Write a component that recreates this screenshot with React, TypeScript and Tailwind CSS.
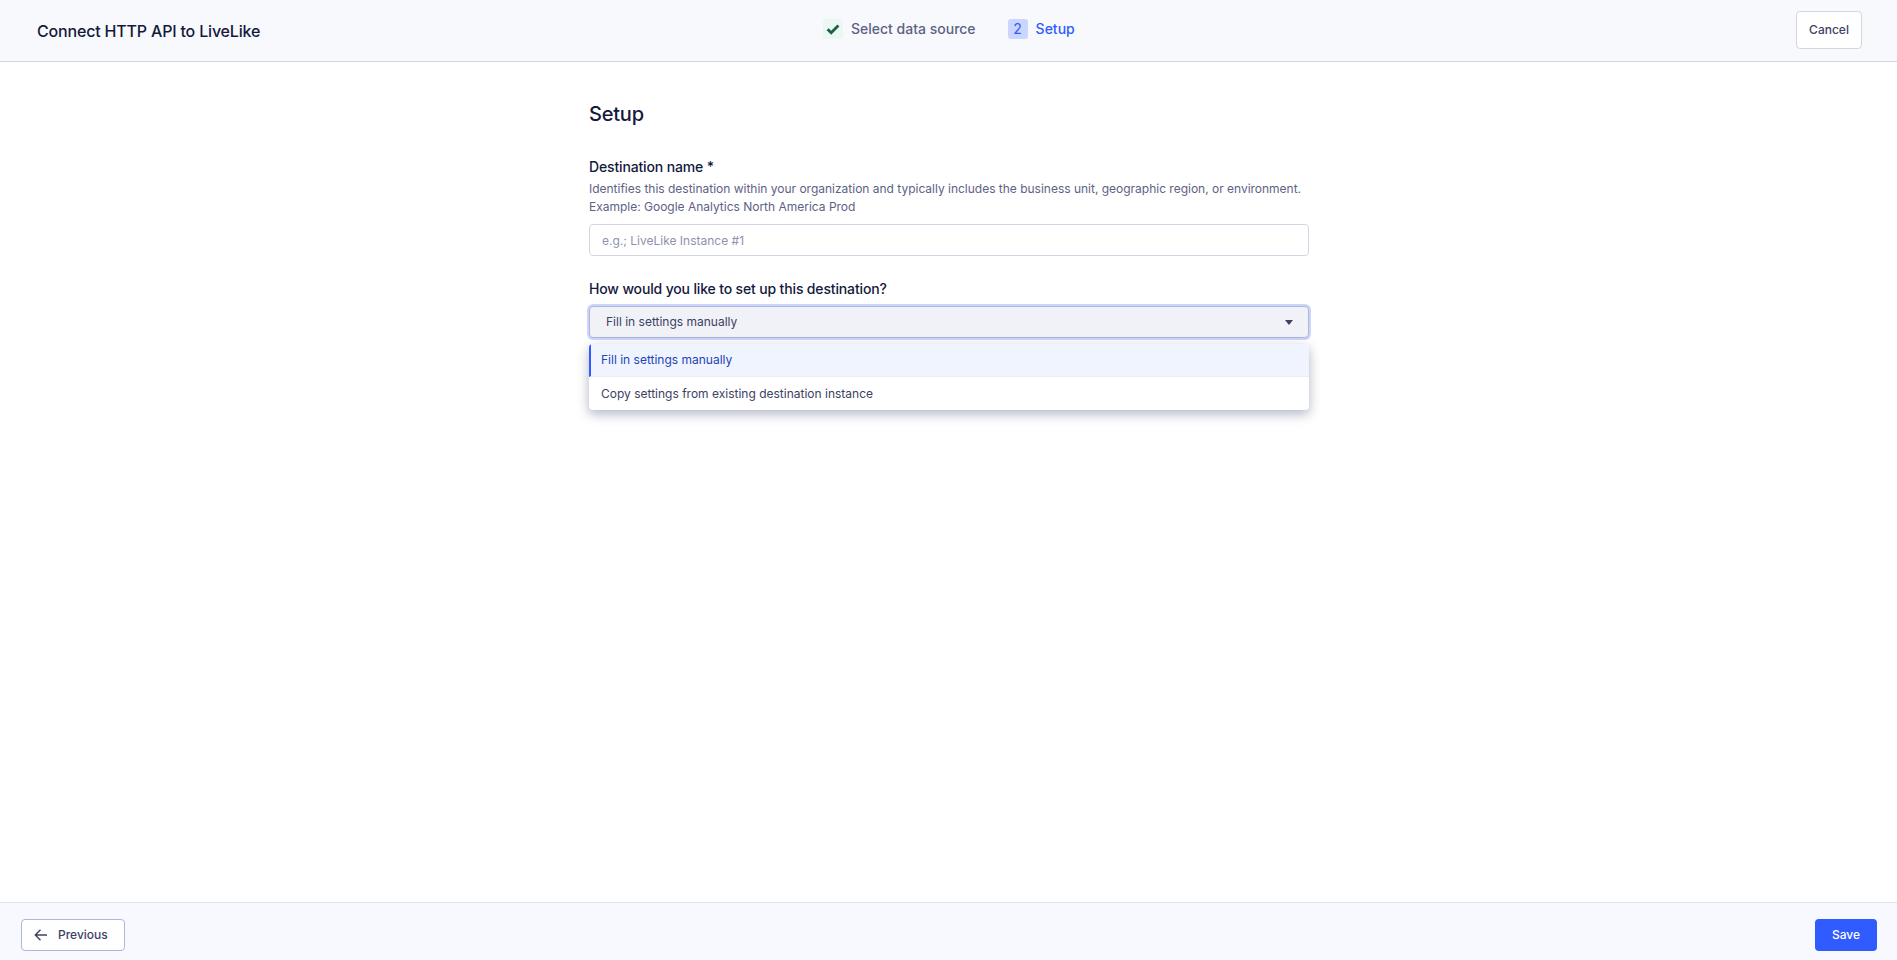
export default function App() {
  return (
    <div className="flex h-[960px] w-full flex-col overflow-hidden bg-white font-['Inter',sans-serif] text-[#1a1f45]">
      <header className="relative flex h-[62px] shrink-0 items-center justify-between border-b border-[#d4d5e3] bg-[#f8f9fd] pl-[37px] pr-[35px]">
        <h1 className="text-base font-medium leading-6 tracking-[-0.18px] text-[#14193c]">Connect HTTP API to LiveLike</h1>
        <div className="absolute left-[823px] top-[19px] flex items-center">
          <span className="flex h-5 w-5 items-center justify-center rounded-[3px] bg-[#ebf7f2]">
            <svg width="14" height="14" viewBox="0 0 14 14" fill="none">
              <path d="M1.6 7.2 5.2 10.8 12.4 3.6" stroke="#1d6244" strokeWidth="2.8" />
            </svg>
          </span>
          <span className="ml-2 text-sm font-medium leading-5 text-[#5d6285]">Select data source</span>
          <span className="ml-[32px] flex h-5 w-5 items-center justify-center rounded-[3px] bg-[#cbd6ff] text-sm leading-5 text-[#2f5bff]">2</span>
          <span className="ml-2 text-sm font-medium leading-5 text-[#2f5bff]">Setup</span>
        </div>
        <button className="mb-[2px] h-[38px] w-[66px] rounded-[4px] border border-[#d4d5e3] bg-white text-xs font-medium text-[#3d4163]">Cancel</button>
      </header>

      <main className="flex flex-1 justify-center">
        <div className="ml-[1px] w-[720px]">
          <h2 className="mt-[38px] text-xl font-medium leading-7 tracking-[-0.2px] text-[#14193c]">Setup</h2>
          <label className="mt-[29px] block text-sm font-medium leading-5 tracking-[-0.15px] text-[#14193c]">Destination name *</label>
          <p className="mt-[3px] text-xs leading-[18px] tracking-[-0.01px] text-[#5d6285]">
            Identifies this destination within your organization and typically includes the business unit, geographic region, or environment.
            <br />
            Example: Google Analytics North America Prod
          </p>
          <input
            readOnly
            placeholder="e.g.; LiveLike Instance #1"
            className="mt-2 block h-8 w-full rounded-[4px] border border-[#d4d5e3] bg-white px-3 text-xs text-[#14193c] outline-none placeholder:text-[#8e92ad]"
          />
          <label className="mt-[23px] block text-sm font-medium leading-5 tracking-[-0.15px] text-[#14193c]">How would you like to set up this destination?</label>
          <div className="relative mt-[7px]">
            <div className="flex h-8 items-center justify-between rounded-[4px] border border-[#b1b5d6] bg-[#f1f2f7] pl-4 pr-[15px] text-xs text-[#3d4163] shadow-[0_0_0_2px_#cbd6ff]">
              <span>Fill in settings manually</span>
              <svg width="8" height="5" viewBox="0 0 8 5"><path d="M0 0h8L4 5z" fill="#3d4163" /></svg>
            </div>
            <div className="absolute left-0 top-full mt-[6px] w-full overflow-hidden rounded-[4px] bg-white text-xs shadow-[0_4px_12px_rgba(60,70,110,0.4)]">
              <div className="flex h-[33px] items-center border-b border-[#e9ecf6] border-l-2 border-l-[#2f5bff] bg-[#f0f4fe] pl-[10px] text-[#2344b8]">Fill in settings manually</div>
              <div className="flex h-[33px] items-center pl-3 text-[#3d4163]">Copy settings from existing destination instance</div>
            </div>
          </div>
        </div>
      </main>

      <footer className="flex h-[58px] shrink-0 items-start justify-between border-t border-[#e2e3ee] bg-[#f8f9fe] pl-[21px] pr-5 pt-4">
        <button className="flex h-8 w-[104px] items-center rounded-[4px] border border-[#b1b5d6] bg-white pl-3 text-xs font-medium text-[#3d4163]">
          <svg width="14" height="14" viewBox="0 0 14 14" fill="none">
            <path d="M13 7H1.5M6.5 1.8 1.3 7l5.2 5.2" stroke="#3d4163" strokeWidth="1.4" />
          </svg>
          <span className="ml-[10px]">Previous</span>
        </button>
        <button className="h-8 w-[62px] rounded-[4px] bg-[#2f5bff] text-xs font-medium text-white">Save</button>
      </footer>
    </div>
  );
}
